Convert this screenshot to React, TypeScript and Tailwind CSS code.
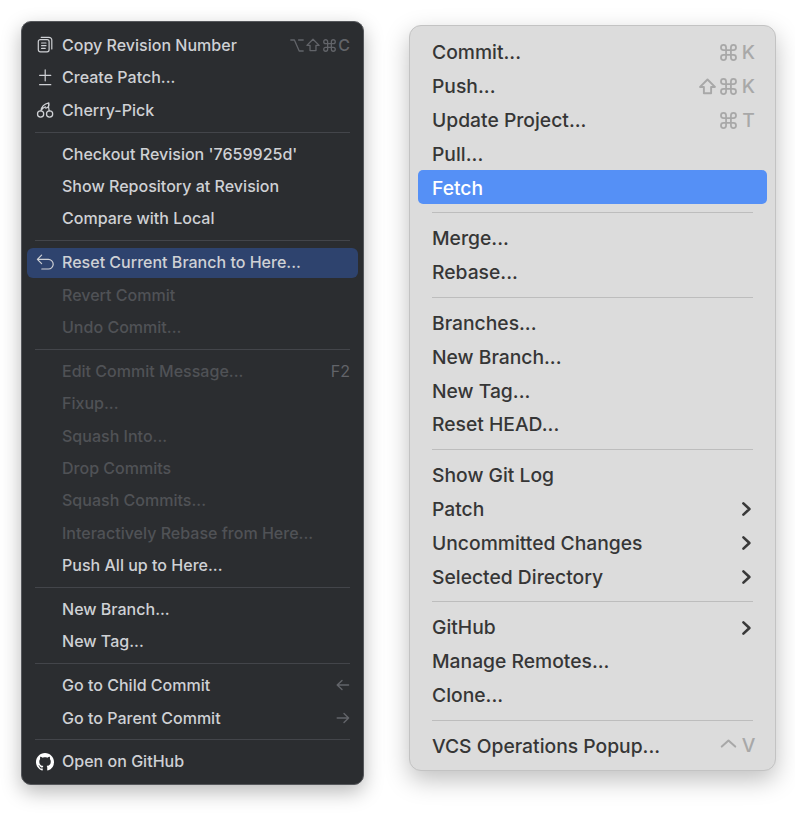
import type { ReactNode } from "react";

type Item = {
  label: string;
  icon?: ReactNode;
  trailing?: ReactNode;
  disabled?: boolean;
  selected?: boolean;
};

const stroke = {
  fill: "none",
  stroke: "currentColor",
  strokeLinecap: "round" as const,
  strokeLinejoin: "round" as const,
};

const COMMAND =
  "M5 5V2.9A2.1 2.1 0 1 0 2.9 5H11.1A2.1 2.1 0 1 0 9 2.9V11.1A2.1 2.1 0 1 0 11.1 9H2.9A2.1 2.1 0 1 0 5 11.1Z";

function Command({ className, width = 1.2 }: { className: string; width?: number }) {
  return (
    <svg className={className} viewBox="0 0 14 14" {...stroke} strokeWidth={width}>
      <path d={COMMAND} />
    </svg>
  );
}

function Shift({ className, width = 1.2 }: { className: string; width?: number }) {
  return (
    <svg className={className} viewBox="0 0 16 16" {...stroke} strokeWidth={width}>
      <path d="M8 1.4 15 8.4H11.4V14.4H4.6V8.4H1Z" />
    </svg>
  );
}

function CopyIcon() {
  return (
    <svg className="size-[18px]" viewBox="0 0 18 18" {...stroke} strokeWidth="1.2">
      <rect x="2.3" y="3.6" width="10.8" height="12.2" rx="2" />
      <path d="M5.2 1.3H13A2.8 2.8 0 0 1 15.8 4.1V13M5.6 7H10M5.6 9.7H10M5.6 12.4H9.2" />
    </svg>
  );
}

function PatchIcon() {
  return (
    <svg className="size-[18px]" viewBox="0 0 18 18" {...stroke} strokeWidth="1.2">
      <path d="M9.2 .8V11.8M3.6 6.3H14.8M3.6 15.7H14.8" />
    </svg>
  );
}

function CherryIcon() {
  return (
    <svg className="size-[18px]" viewBox="0 0 18 18" {...stroke} strokeWidth="1.25">
      <circle cx="4.6" cy="13" r="3.1" />
      <circle cx="13.6" cy="13" r="3.1" />
      <path d="M5 9.8C5.4 5.8 8 2.8 12.8 1.8C13.4 4.2 12.5 6.4 9.8 7.2M12.8 1.8C12.4 4 12.5 7.4 13.2 9.8M5.2 9.2C6 7.6 7.6 6.4 9.4 5.8" />
    </svg>
  );
}

function ResetIcon() {
  return (
    <svg className="size-[18px]" viewBox="0 0 18 18" {...stroke} strokeWidth="1.2">
      <path d="M5.6 1.2 1.4 5.4 5.6 9.6M1.6 5.4H12.4A4.7 4.7 0 0 1 12.4 15H5.8" />
    </svg>
  );
}

function GitHubIcon() {
  return (
    <svg className="size-[18px] text-white" viewBox="0 0 16 16" fill="currentColor">
      <path d="M8 0C3.58 0 0 3.58 0 8c0 3.54 2.29 6.53 5.47 7.59.4.07.55-.17.55-.38 0-.19-.01-.82-.01-1.49-2.01.37-2.53-.49-2.69-.94-.09-.23-.48-.94-.82-1.13-.28-.15-.68-.52-.01-.53.63-.01 1.08.58 1.23.82.72 1.21 1.87.87 2.33.66.07-.52.28-.87.51-1.07-1.78-.2-3.64-.89-3.64-3.95 0-.87.31-1.59.82-2.15-.08-.2-.36-1.02.08-2.12 0 0 .67-.21 2.2.82.64-.18 1.32-.27 2-.27s1.36.09 2 .27c1.53-1.04 2.2-.82 2.2-.82.44 1.1.16 1.92.08 2.12.51.56.82 1.27.82 2.15 0 3.07-1.87 3.75-3.65 3.95.29.25.54.73.54 1.48 0 1.07-.01 1.93-.01 2.2 0 .21.15.46.55.38A8.01 8.01 0 0 0 16 8c0-4.42-3.58-8-8-8Z" />
    </svg>
  );
}

function DarkArrow({ d }: { d: string }) {
  return (
    <svg className="h-[12px] w-[14px]" viewBox="0 0 14 12" {...stroke} strokeWidth="1.4">
      <path d={d} />
    </svg>
  );
}

function Chevron() {
  return (
    <svg className="mr-[4px] h-[16px] w-[11px] text-[#393939]" viewBox="0 0 11 16" {...stroke} strokeWidth="2.6">
      <path d="M2.4 2.4 8.4 8 2.4 13.6" />
    </svg>
  );
}

const darkGroups: Item[][] = [
  [
    {
      label: "Copy Revision Number",
      icon: <CopyIcon />,
      trailing: (
        <span className="flex items-center gap-[2px]">
          <svg className="h-[13px] w-[14px]" viewBox="0 0 14 13" {...stroke} strokeWidth="1.3">
            <path d="M.8 1H4.4L9.2 12H13.2M8.6 1H13.2" />
          </svg>
          <Shift className="size-[14px]" width={1.5} />
          <Command className="ml-[1px] size-[13px]" width={1.4} />
          <span className="font-medium">C</span>
        </span>
      ),
    },
    { label: "Create Patch...", icon: <PatchIcon /> },
    { label: "Cherry-Pick", icon: <CherryIcon /> },
  ],
  [
    { label: "Checkout Revision '7659925d'" },
    { label: "Show Repository at Revision" },
    { label: "Compare with Local" },
  ],
  [
    { label: "Reset Current Branch to Here...", icon: <ResetIcon />, selected: true },
    { label: "Revert Commit", disabled: true },
    { label: "Undo Commit...", disabled: true },
  ],
  [
    { label: "Edit Commit Message...", disabled: true, trailing: "F2" },
    { label: "Fixup...", disabled: true },
    { label: "Squash Into...", disabled: true },
    { label: "Drop Commits", disabled: true },
    { label: "Squash Commits...", disabled: true },
    { label: "Interactively Rebase from Here...", disabled: true },
    { label: "Push All up to Here..." },
  ],
  [{ label: "New Branch..." }, { label: "New Tag..." }],
  [
    { label: "Go to Child Commit", trailing: <DarkArrow d="M12.6 6H1.2M6 1.4 1.2 6 6 10.6" /> },
    { label: "Go to Parent Commit", trailing: <DarkArrow d="M1.2 6H12.6M8 1.4 12.6 6 8 10.6" /> },
  ],
  [{ label: "Open on GitHub", icon: <GitHubIcon /> }],
];

const commandKey = (key: string, shift = false) => (
  <span className="flex items-center">
    {shift && <Shift className="mr-[4px] size-[17px]" width={1.8} />}
    <Command className="size-[17px]" width={1.45} />
    <span className="ml-[4px] w-[15px] text-center">{key}</span>
  </span>
);

const lightGroups: Item[][] = [
  [
    { label: "Commit...", trailing: commandKey("K") },
    { label: "Push...", trailing: commandKey("K", true) },
    { label: "Update Project...", trailing: commandKey("T") },
    { label: "Pull..." },
    { label: "Fetch", selected: true },
  ],
  [{ label: "Merge..." }, { label: "Rebase..." }],
  [
    { label: "Branches..." },
    { label: "New Branch..." },
    { label: "New Tag..." },
    { label: "Reset HEAD..." },
  ],
  [
    { label: "Show Git Log" },
    { label: "Patch", trailing: <Chevron /> },
    { label: "Uncommitted Changes", trailing: <Chevron /> },
    { label: "Selected Directory", trailing: <Chevron /> },
  ],
  [
    { label: "GitHub", trailing: <Chevron /> },
    { label: "Manage Remotes..." },
    { label: "Clone..." },
  ],
  [
    {
      label: "VCS Operations Popup...",
      trailing: (
        <span className="flex items-center">
          <svg className="mb-[5px] h-[9px] w-[17px]" viewBox="0 0 17 9" {...stroke} strokeWidth="2">
            <path d="M1.8 7.6 8.5 1.5 15.2 7.6" />
          </svg>
          <span className="ml-[4px] w-[15px] text-center">V</span>
        </span>
      ),
    },
  ],
];

function DarkMenu() {
  return (
    <div className="mt-[21px] ml-[21px] h-[764px] w-[343px] rounded-[10px] border border-[#55575b] bg-[#2b2d30] px-[5px] pt-[7.2px] text-[16.05px] font-medium text-[#cfd1d5] shadow-[0_7px_20px_rgba(0,0,0,0.28)]">
      {darkGroups.map((group, g) => (
        <div key={g}>
          {g > 0 && (
            <div className="flex h-[11.3px] items-center px-[8px]">
              <div className="h-px w-full bg-[#43454a]" />
            </div>
          )}
          {group.map((item) => (
            <div key={item.label} className="flex h-[32.43px] items-center">
              <div
                className={`flex h-[30px] w-full items-center rounded-[6px] pr-[8px] pl-[9px] ${
                  item.selected ? "bg-[#2e436e]" : ""
                } ${item.disabled ? "text-[#505256]" : ""}`}
              >
                <span className="flex w-[26px] shrink-0">{item.icon}</span>
                <span className="flex-1 pb-[0.6px] whitespace-nowrap">{item.label}</span>
                <span className="font-normal text-[#626469]">{item.trailing}</span>
              </div>
            </div>
          ))}
        </div>
      ))}
    </div>
  );
}

function LightMenu() {
  return (
    <div className="mt-[25px] ml-[45px] h-[746px] w-[367px] rounded-[12px] border border-[#c3c3c3] bg-[#dcdcdc] px-[8px] pt-[9.2px] text-[19.3px] font-[450] text-[#363636] shadow-[0_9px_24px_rgba(0,0,0,0.25)]">
      {lightGroups.map((group, g) => (
        <div key={g}>
          {g > 0 && (
            <div className="flex h-[17px] items-center px-[14px]">
              <div className="h-px w-full bg-[#bdbdbd]" />
            </div>
          )}
          {group.map((item) => (
            <div
              key={item.label}
              className={`flex h-[33.8px] items-center rounded-[5px] pr-[11px] pl-[14px] ${
                item.selected ? "bg-[#5590f6] font-medium text-white" : ""
              }`}
            >
              <span className="flex-1 pt-[1.6px] whitespace-nowrap">{item.label}</span>
              <span className="pt-[1px] text-[#a8a8a8]">{item.trailing}</span>
            </div>
          ))}
        </div>
      ))}
    </div>
  );
}

export default function App() {
  return (
    <main className="flex h-[816px] w-[795px] items-start overflow-hidden bg-white font-['Inter',sans-serif]">
      <DarkMenu />
      <LightMenu />
    </main>
  );
}
